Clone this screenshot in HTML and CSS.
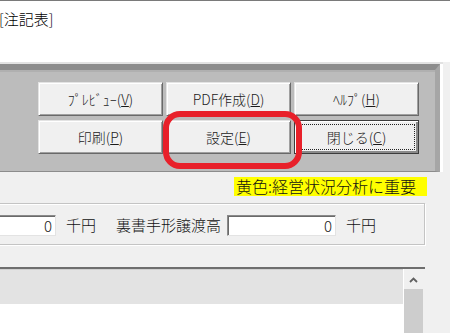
FILE: index.html
```html
<!DOCTYPE html>
<html lang="ja">
<head>
<meta charset="utf-8">
<link rel="stylesheet" href="styles.css">
</head>
<body>
<div class="topline"></div>
<header class="titlebar"><span class="title">[注記表]</span></header>
<div class="frame">
  <section class="toolbar">
    <div class="buttons">
      <button class="btn">ﾌﾟﾚﾋﾞｭｰ(<u>V</u>)</button>
      <button class="btn">PDF作成(<u>D</u>)</button>
      <button class="btn">ﾍﾙﾌﾟ(<u>H</u>)</button>
      <button class="btn">印刷(<u>P</u>)</button>
      <button class="btn">設定(<u>E</u>)</button>
      <button class="btn btn-default">閉じる(<u>C</u>)</button>
    </div>
  </section>
  <div class="highlight"></div>
</div>
<div class="legend-row"><span class="legend">黄色:経営状況分析に重要</span></div>
<div class="group">
  <span class="textbox tb-first">0</span>
  <span class="label">千円</span>
  <span class="label label-wide">裏書手形譲渡高</span>
  <span class="textbox tb-second">0</span>
  <span class="label">千円</span>
</div>
<div class="grid">
  <div class="grid-main">
    <div class="grid-head"></div>
    <div class="grid-body"></div>
  </div>
  <div class="scrollbar">
    <div class="sb-arrow"><svg width="9" height="6" viewBox="0 0 9 6"><path d="M1 5 L4.5 1.5 L8 5" fill="none" stroke="#606060" stroke-width="1.8"/></svg></div>
    <div class="sb-thumb"></div>
  </div>
</div>
</body>
</html>
```

FILE: styles.css
```css
* { box-sizing: border-box; }
html, body { margin: 0; padding: 0; }
body {
  width: 450px;
  height: 333px;
  overflow: hidden;
  background: #f0f0f0;
  font-family: "Noto Sans CJK JP", "Noto Sans", sans-serif;
  font-weight: 300;
  color: #000;
}
.topline { height: 1px; background: #7a7a7a; }
.titlebar {
  height: 61px;
  background: #fff;
  padding-top: 8px;
}
.title {
  display: block;
  margin-left: -1px;
  font-size: 15px;
  line-height: 20px;
}
.frame {
  position: relative;
  width: 443px;
  border-top: 2px solid #e2e2e2;
  background: #fff;
}
.toolbar {
  width: 440px;
  height: 108px;
  background: #bcbcbc;
  border-top: 6px solid #8c8c8c;
  border-right: 5px solid #a6a6a6;
  border-bottom: 1px solid #8c8c8c;
  padding: 12px 0 0 38px;
  box-shadow: inset 0 2px 0 #b0b0b0;
}
.buttons {
  display: grid;
  grid-template-columns: repeat(3, 125px);
  grid-auto-rows: 34px;
  column-gap: 3px;
  row-gap: 4px;
}
.btn {
  font-family: "Noto Sans CJK JP", sans-serif;
  font-weight: 300;
  font-size: 14px;
  line-height: 16px;
  color: #1a1a1a;
  background: #f0f0f0;
  border: 1px solid;
  border-color: #e3e3e3 #696969 #696969 #e3e3e3;
  box-shadow: inset 1px 1px 0 #fff, inset -1px -1px 0 #a0a0a0;
  padding: 0;
  margin: 0;
}
.btn u { text-underline-offset: 1px; }
.btn-default {
  border: 1px solid #3c3c3c;
  box-shadow: inset 1px 1px 0 #fff, inset -2px -2px 0 #8a8a8a;
  outline: 1px dotted #222;
  outline-offset: -5px;
}
.highlight {
  position: absolute;
  left: 163px;
  top: 47px;
  width: 139px;
  height: 58px;
  border: 6px solid #e8202a;
  border-radius: 17px;
}
.legend-row {
  display: flex;
  justify-content: flex-end;
  padding-right: 23px;
  margin-top: 5px;
}
.legend {
  background: #ffff00;
  font-size: 16px;
  line-height: 19px;
  height: 19px;
  padding: 0 11px 0 2px;
  color: #111;
}
.group {
  display: flex;
  align-items: center;
  margin: 7px 0 0 -10px;
  width: 435px;
  height: 42px;
  border: 1px solid #c4c4c4;
  box-shadow: inset 1px 1px 0 #fff, 1px 1px 0 #fff;
  padding-top: 2px;
}
.textbox {
  display: block;
  height: 21px;
  background: #fff;
  border: 1px solid;
  border-color: #8a8a8a #e3e3e3 #e3e3e3 #8a8a8a;
  box-shadow: inset 1px 1px 0 #6a6a6a;
  text-align: right;
  padding-right: 3px;
  font-size: 15px;
  line-height: 19px;
  color: #222;
}
.tb-first { width: 65px; }
.tb-second { width: 109px; margin-left: 6px; }
.label {
  font-size: 15px;
  line-height: 20px;
  margin-left: 10px;
  color: #111;
}
.label-wide { margin-left: 20px; }
.grid {
  display: flex;
  margin: 22px 0 0 -10px;
  width: 435px;
  height: 80px;
  border-top: 2px solid #6e6e6e;
  box-shadow: inset 0 1px 0 #c8c8c8;
}
.grid-main { flex: 1; display: flex; flex-direction: column; }
.grid-head { height: 35px; background: #e3e3e3; border-top: 1px solid #d0d0d0; }
.grid-body { flex: 1; background: #fff; }
.scrollbar {
  width: 22px;
  background: #f0f0f0;
  border-left: 1px solid #fff;
  display: flex;
  flex-direction: column;
  padding-right: 2px;
}
.sb-arrow {
  height: 20px;
  display: flex;
  align-items: center;
  justify-content: center;
  padding-top: 2px;
}
.sb-thumb { flex: 1; background: #cdcdcd; }
```
